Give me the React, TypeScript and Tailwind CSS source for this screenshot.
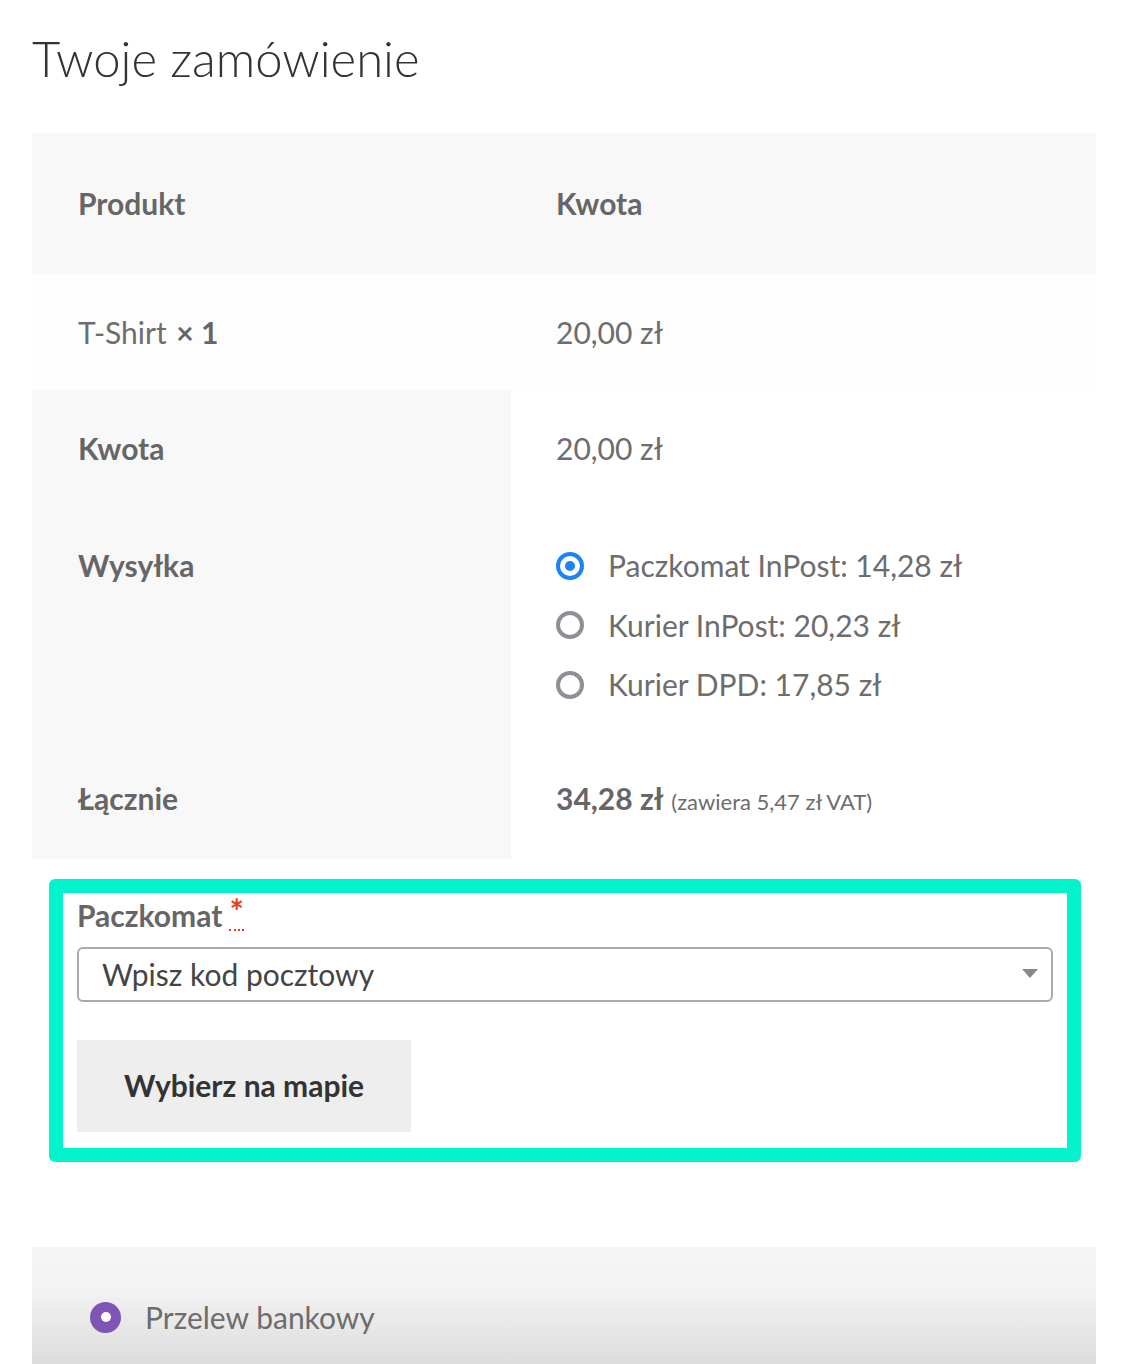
export default function App() {
  const options = [
    { label: "Paczkomat InPost: 14,28 zł", checked: true },
    { label: "Kurier InPost: 20,23 zł", checked: false },
    { label: "Kurier DPD: 17,85 zł", checked: false },
  ];
  return (
    <div className="relative h-[1364px] overflow-hidden bg-white font-['Lato',sans-serif] text-[#6d6d6d]">
      <div className="ml-[32px] w-[1064px]">
        <h1 className="pt-[26px] text-[49px] font-light leading-[64px] text-[#333]">Twoje zamówienie</h1>
        <div className="mt-[43px]">
          <div className="grid grid-cols-[479px_585px] bg-[#f8f8f8] text-[30px] font-bold leading-[45px] text-[#666]">
            <div className="py-[48px] pl-[46px]">Produkt</div>
            <div className="py-[48px] pl-[45px]">Kwota</div>
          </div>
          <div className="grid grid-cols-[479px_585px] bg-[#fdfdfd] text-[30px] leading-[45px]">
            <div className="py-[35.5px] pl-[46px]">
              T-Shirt <span className="ml-[2px] font-bold text-[#666]">× 1</span>
            </div>
            <div className="py-[35.5px] pl-[45px]">20,00 zł</div>
          </div>
          <div className="grid grid-cols-[479px_585px] text-[30px] leading-[45px]">
            <div className="bg-[#f8f8f8] py-[36px] pl-[46px] font-bold text-[#666]">Kwota</div>
            <div className="py-[36px] pl-[45px]">20,00 zł</div>
            <div className="bg-[#f8f8f8] pb-[33px] pl-[46px] pt-[36px] font-bold text-[#666]">Wysyłka</div>
            <div className="flex flex-col gap-[14.5px] pb-[33px] pl-[45px] pt-[36px]">
              {options.map((o) => (
                <div key={o.label} className="flex items-center gap-[24px]">
                  {o.checked ? (
                    <span className="flex h-[28px] w-[28px] items-center justify-center rounded-full border-[4px] border-[#1a84f5]">
                      <span className="h-[10px] w-[10px] rounded-full bg-[#1a84f5]" />
                    </span>
                  ) : (
                    <span className="h-[28px] w-[28px] rounded-full border-[4px] border-[#8f8f96]" />
                  )}
                  <span>{o.label}</span>
                </div>
              ))}
            </div>
            <div className="bg-[#f8f8f8] pb-[35px] pl-[46px] pt-[35.5px] font-bold text-[#666]">Łącznie</div>
            <div className="pb-[35px] pl-[45px] pt-[35.5px]">
              <span className="font-bold text-[#666]">34,28 zł</span>{" "}
              <span className="text-[22px]">(zawiera 5,47 zł VAT)</span>
            </div>
          </div>
        </div>
        <div className="ml-[17px] mt-[20px] w-[1032px] rounded-[6px] border-[14px] border-[#03f3cc] px-[14px] pb-[16px] pt-[2px]">
          <div className="flex items-start text-[30px] font-bold leading-[40px] text-[#666]">
            <span>Paczkomat</span>
            <abbr className="ml-[7px] mt-[-2px] border-b-[2px] border-dotted border-[#e2401c] text-[34px] leading-[36px] font-bold text-[#e2401c] no-underline" title="wymagane">
              *
            </abbr>
          </div>
          <div className="mt-[12px] flex h-[55px] items-center justify-between rounded-[6px] border-[2px] border-[#aaa] pl-[23px] pr-[13px]">
            <span className="text-[30px] text-[#444]">Wpisz kod pocztowy</span>
            <svg width="16" height="10" viewBox="0 0 16 10">
              <path d="M0 0 L16 0 L8 9 Z" fill="#888" />
            </svg>
          </div>
          <button className="mt-[38px] flex h-[92px] w-[334px] items-center justify-center bg-[#eeeeee] text-[30px] font-bold text-[#333]">
            Wybierz na mapie
          </button>
        </div>
        <div className="mt-[85px] h-[200px] bg-[linear-gradient(to_bottom,#f5f5f5_0px,#f3f3f3_40px,#dcdcdc_120px)] pl-[58px] pt-[48px]">
          <div className="flex items-center gap-[24px]">
            <span className="flex h-[31px] w-[31px] items-center justify-center rounded-full bg-[#7f54b3]">
              <span className="h-[10px] w-[10px] rounded-full bg-white" />
            </span>
            <span className="text-[30px] leading-[45px]">Przelew bankowy</span>
          </div>
        </div>
      </div>
    </div>
  );
}
